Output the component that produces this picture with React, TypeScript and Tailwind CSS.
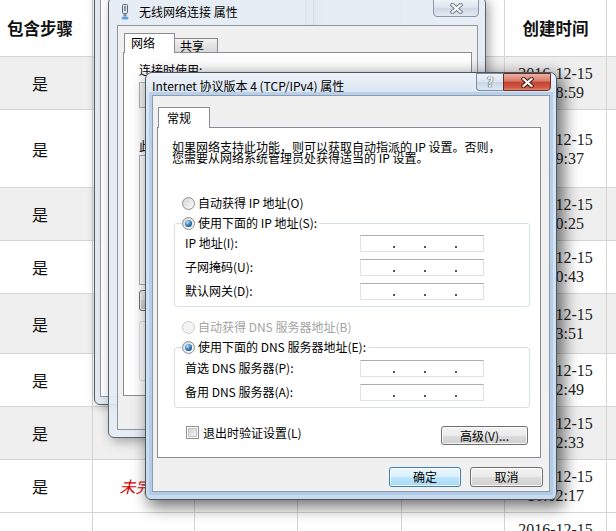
import clsx from "clsx";

const cjk = "font-['Noto_Sans_CJK_SC',sans-serif]";

type Row = { h: string; gray: boolean; time: string; note?: boolean };

const rows: Row[] = [
  { h: "h-[53px]", gray: true, time: "17:18:59" },
  { h: "h-[78px]", gray: false, time: "17:09:37" },
  { h: "h-[53px]", gray: true, time: "16:50:25" },
  { h: "h-[53px]", gray: false, time: "16:40:43" },
  { h: "h-[60px]", gray: true, time: "16:33:51" },
  { h: "h-[53px]", gray: false, time: "16:22:49" },
  { h: "h-[53px]", gray: true, time: "16:12:33" },
  { h: "h-[53px]", gray: false, time: "16:02:17", note: true },
  { h: "h-[53px]", gray: false, time: "15:52:07" },
];

const line = "border-r border-[#d5d5d5]";

function Table() {
  return (
    <div className={clsx("ml-[-12px] flex w-[628px] flex-col", cjk)}>
      <div className="flex h-[57px] border-b border-[#d5d5d5] bg-white text-[16.5px] font-bold text-[#111]">
        <div className={clsx("flex w-[105px] items-center justify-center", line)}>包含步骤</div>
        <div className={clsx("w-[102px]", line)} />
        <div className={clsx("w-[103px]", line)} />
        <div className={clsx("w-[104px]", line)} />
        <div className={clsx("w-[103px]", line)} />
        <div className={clsx("flex w-[102px] items-center justify-center", line)}>创建时间</div>
        <div className="flex-1" />
      </div>
      {rows.map((r, i) => (
        <div
          key={i}
          className={clsx("flex border-b border-[#d5d5d5]", r.h, r.gray ? "bg-[#efefef]" : "bg-white")}
        >
          <div className={clsx("flex w-[105px] items-center justify-center text-[16px] text-[#111]", line)}>是</div>
          <div className={clsx("flex w-[102px] items-center justify-center", line)}>
            {r.note && <span className="text-[16px] italic text-[#d40000]">未完成</span>}
          </div>
          <div className={clsx("w-[103px]", line)} />
          <div className={clsx("w-[104px]", line)} />
          <div className={clsx("w-[103px]", line)} />
          <div
            className={clsx(
              "flex w-[102px] flex-col items-center justify-center font-['Liberation_Serif',serif] text-[16px] leading-[19px] text-[#222]",
              line
            )}
          >
            <span>2016-12-15</span>
            <span>{r.time}</span>
          </div>
          <div className="flex-1" />
        </div>
      ))}
    </div>
  );
}

function CloseGlyph({ dark }: { dark: string }) {
  return (
    <svg width="13" height="11" viewBox="0 0 13 11">
      <path d="M2.5 2 L10.5 9 M10.5 2 L2.5 9" stroke={dark} strokeWidth="4.2" strokeLinecap="square" />
      <path d="M2.5 2 L10.5 9 M10.5 2 L2.5 9" stroke="#fff" strokeWidth="2.2" strokeLinecap="square" />
    </svg>
  );
}

function Radio({ checked, disabled }: { checked?: boolean; disabled?: boolean }) {
  return (
    <span
      className={clsx(
        "flex h-[13px] w-[13px] shrink-0 items-center justify-center rounded-full border",
        disabled
          ? "border-[#cdcdcd] bg-[#f4f4f4]"
          : "border-[#8e8f8f] bg-[linear-gradient(135deg,#d4d4d4,#fbfbfb)]"
      )}
    >
      {checked && (
        <span className="h-[7px] w-[7px] rounded-full bg-[radial-gradient(circle_at_35%_30%,#b4e2ff,#2b72b4_55%,#0b3465)]" />
      )}
    </span>
  );
}

function IpBox() {
  return (
    <div className="flex h-[17px] w-[124px] items-end gap-[29px] border border-[#e0e2e6] border-t-[#abadb3] bg-white pb-[3px] pl-[32px]">
      <span className="h-[2px] w-[2px] bg-[#555]" />
      <span className="h-[2px] w-[2px] bg-[#555]" />
      <span className="h-[2px] w-[2px] bg-[#555]" />
    </div>
  );
}

function Field({ label }: { label: string }) {
  return (
    <div className="flex h-[24px] items-center pl-[10px]">
      <span className="w-[175px] leading-[16px]">{label}</span>
      <IpBox />
    </div>
  );
}

function Btn({ children, className, primary }: { children: React.ReactNode; className?: string; primary?: boolean }) {
  return (
    <div
      className={clsx(
        "flex items-center justify-center rounded-[3px] border text-[12px] leading-[14px] text-black shadow-[inset_0_0_0_1px_rgba(255,255,255,0.8)]",
        primary
          ? "border-[#3c7fb1] bg-[linear-gradient(180deg,#eaf6fd_0%,#d9f0fc_50%,#bee6fd_50%,#a7d9f5_100%)]"
          : "border-[#707070] bg-[linear-gradient(180deg,#f2f2f2_0%,#ebebeb_50%,#dddddd_50%,#cfcfcf_100%)]",
        className
      )}
    >
      {children}
    </div>
  );
}

function PlugIcon() {
  return (
    <svg width="8" height="16" viewBox="0 0 8 16" className="mt-[6px]">
      <rect x="1.5" y="0.5" width="5" height="9" rx="1" fill="#dfe5ec" stroke="#5c6875" />
      <rect x="3" y="2" width="2" height="5" fill="#8796a6" />
      <rect x="2.5" y="9.5" width="3" height="3" fill="#7e8b99" />
      <ellipse cx="4" cy="14" rx="3.5" ry="1.6" fill="#5aa0e6" />
    </svg>
  );
}

function BackWindow() {
  return (
    <div className="absolute left-[94px] top-[-60px] flex h-[465px] w-[220px] flex-col rounded-[6px] border border-[#56606b] bg-[rgba(222,230,239,0.92)] shadow-[2px_2px_10px_rgba(0,0,0,0.3)]">
      <div className="h-[52px] shrink-0" />
      <div className="mb-[7px] ml-[5px] mr-[7px] flex-1 border border-[#8d98a4] bg-white" />
    </div>
  );
}

function WirelessDialog() {
  return (
    <div
      className={clsx(
        "absolute left-[108px] top-[-3px] flex h-[441px] w-[378px] flex-col rounded-[6px] border border-[#59636e] bg-[rgba(228,235,243,0.9)] shadow-[3px_3px_12px_rgba(0,0,0,0.35)]",
        cjk
      )}
    >
      <div className="flex h-[27px] shrink-0 pl-[12px] pr-[6px]">
        <PlugIcon />
        <span className="ml-[10px] mt-[7px] text-[12px] leading-[14px] text-black">无线网络连接 属性</span>
        <div className="ml-auto mt-[1px] flex h-[18px] w-[46px] items-center justify-center rounded-b-[4px] border border-[#8a97a8] bg-[linear-gradient(180deg,#eef3f8,#dbe3ec_50%,#cdd8e4_51%,#e2e9f1)]">
          <CloseGlyph dark="#6f7b89" />
        </div>
      </div>
      <div className="mb-[7px] ml-[8px] mr-[7px] flex flex-1 flex-col border border-[#8d98a4] bg-[#f0f0f0] pl-[5px] pt-[7px] text-[12px] text-black">
        <div className="relative z-10 ml-[1px] flex h-[20px] items-end">
          <div className="h-[20px] w-[51px] border border-b-0 border-[#898c95] bg-white pl-[6px] pt-[1px] leading-[16px]">网络</div>
          <div className="h-[15px] w-[43px] border border-l-0 border-[#898c95] bg-[linear-gradient(180deg,#f3f3f3,#e3e3e3_50%,#d9d9d9)] pl-[5px] leading-[13px]">共享</div>
        </div>
        <div className="-mt-px flex h-[344px] w-[349px] flex-col border border-[#898c95] bg-white pl-[15px] pt-[10px]">
          <span className="leading-[14px]">连接时使用:</span>
          <div className="mt-[5px] h-[26px] w-[320px] border border-[#adb2b5] bg-[#f4f4f4]" />
          <span className="mt-[31px] leading-[14px]">此连接使用下列项目(O):</span>
          <div className="mt-[2px] h-[130px] w-[320px] border border-[#a9afb6] bg-white" />
          <Btn className="mt-[5px] h-[21px] w-[75px]">安装(N)...</Btn>
          <div className="mt-[10px] h-[60px] w-[320px] rounded-[3px] border border-[#d5dfe5]" />
        </div>
      </div>
    </div>
  );
}

function TcpDialog() {
  return (
    <div
      className={clsx(
        "absolute left-[145px] top-[72px] flex h-[428px] w-[412px] flex-col rounded-b-[6px] rounded-t-[7px] border border-[#4a5866] bg-[linear-gradient(180deg,#eef3f9_0px,#d9e4f0_22px,#d2e0ee_60%,#c9daec_100%)] shadow-[5px_5px_16px_2px_rgba(0,0,0,0.55)]",
        cjk
      )}
    >
      {/* title bar */}
      <div className="flex h-[22px] shrink-0 pl-[6px] pr-[5px]">
        <span className="mt-[6px] text-[12px] leading-[14px] text-black">Internet 协议版本 4 (TCP/IPv4) 属性</span>
        <div className="ml-auto flex h-[18px]">
          <div className="flex w-[27px] items-center justify-center rounded-bl-[4px] border border-r-0 border-[#7d8fa5] bg-[linear-gradient(180deg,#eef3f8,#d9e3ee_50%,#c7d5e5_51%,#dfe8f2)] text-[13px] font-bold leading-[14px] text-white [text-shadow:0_0_1px_#34495f,0_0_1px_#34495f,0_0_1px_#34495f]">
            ?
          </div>
          <div className="flex w-[48px] items-center justify-center rounded-br-[4px] border border-[#6d2b23] bg-[linear-gradient(180deg,#eab0a4_0%,#d8796a_45%,#c5432f_50%,#cf5a47_85%,#e48c70_100%)]">
            <CloseGlyph dark="#4a1610" />
          </div>
        </div>
      </div>

      {/* client */}
      <div className="mb-[7px] ml-[6px] mr-[6px] flex flex-1 flex-col border border-[#8e9baa] bg-[#f0f0f0] pl-[4px] pt-[11px] text-[12px] text-black shadow-[0_0_0_3px_rgba(160,194,232,0.6)]">
        <div className="relative z-10 -mb-px ml-[1px] flex h-[21px]">
          <div className="w-[52px] border border-b-0 border-[#898c95] bg-white pl-[8px] pt-[2px] leading-[16px]">常规</div>
        </div>
        <div className="flex h-[331px] w-[384px] flex-col border border-[#898c95] bg-white">
          <p className="pl-[14px] pt-[13px] leading-[11px]">
            如果网络支持此功能，则可以获取自动指派的 IP 设置。否则，
            <br />
            您需要从网络系统管理员处获得适当的 IP 设置。
          </p>
          <label className="mt-[32px] flex h-[16px] items-center gap-[3px] pl-[24px]">
            <Radio />
            <span className="leading-[16px]">自动获得 IP 地址(O)</span>
          </label>
          <fieldset className="ml-[16px] mt-[4px] w-[356px] rounded-[3px] border border-[#d5dfe5] pb-[3px]">
            <legend className="ml-[7px] pr-[2px]">
              <span className="flex h-[16px] items-center gap-[3px]">
                <Radio checked />
                <span className="leading-[16px]">使用下面的 IP 地址(S):</span>
              </span>
            </legend>
            <Field label="IP 地址(I):" />
            <Field label="子网掩码(U):" />
            <Field label="默认网关(D):" />
          </fieldset>
          <label className="mt-[12px] flex h-[16px] items-center gap-[3px] pl-[24px] text-[#a3a3a3]">
            <Radio disabled />
            <span className="leading-[16px]">自动获得 DNS 服务器地址(B)</span>
          </label>
          <fieldset className="ml-[16px] mt-[4px] w-[356px] rounded-[3px] border border-[#d5dfe5] pb-[3px] pt-[1px]">
            <legend className="ml-[7px] pr-[2px]">
              <span className="flex h-[16px] items-center gap-[3px]">
                <Radio checked />
                <span className="leading-[16px]">使用下面的 DNS 服务器地址(E):</span>
              </span>
            </legend>
            <Field label="首选 DNS 服务器(P):" />
            <Field label="备用 DNS 服务器(A):" />
          </fieldset>
          <div className="mt-[18px] flex items-start justify-between pl-[28px] pr-[12px]">
            <label className="flex h-[13px] items-center gap-[4px]">
              <span className="flex h-[13px] w-[13px] items-center justify-center border border-[#8e8f8f] bg-white">
                <span className="h-[9px] w-[9px] border border-[#c4c4c4] bg-[linear-gradient(135deg,#d2d2d2,#f4f4f4)]" />
              </span>
              <span className="leading-[13px]">退出时验证设置(L)</span>
            </label>
            <Btn className="h-[19px] w-[87px]">高级(V)...</Btn>
          </div>
        </div>
        <div className="mt-[9px] flex justify-end gap-[9px] pr-[6px]">
          <Btn primary className="h-[20px] w-[72px]">确定</Btn>
          <Btn className="h-[20px] w-[73px]">取消</Btn>
        </div>
      </div>
    </div>
  );
}

export default function App() {
  return (
    <div className="relative h-[531px] w-[616px] overflow-hidden bg-white">
      <Table />
      <BackWindow />
      <WirelessDialog />
      <TcpDialog />
    </div>
  );
}
